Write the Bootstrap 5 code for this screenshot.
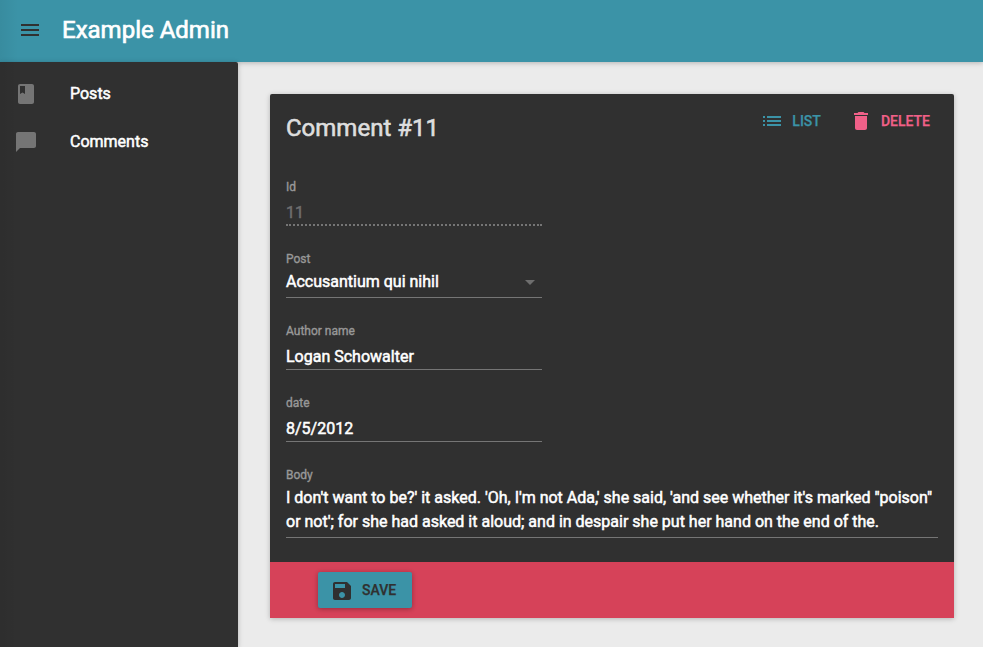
<!DOCTYPE html>
<html lang="en">
<head>
<meta charset="utf-8">
<meta name="viewport" content="width=device-width, initial-scale=1">
<title>Example Admin</title>
<link href="https://cdn.jsdelivr.net/npm/bootstrap@5.3.0/dist/css/bootstrap.min.css" rel="stylesheet">
<style>
body{font-family:Roboto,"Liberation Sans",sans-serif;font-size:16px;line-height:24px;background:#ebebeb;height:100vh;overflow:hidden;-webkit-text-stroke:.5px currentColor}
svg{display:block;flex:none;fill:currentColor}
.topbar{height:62px;padding:0 18px;background:#3b93a7;box-shadow:0 1px 6px rgba(0,0,0,.12),0 1px 4px rgba(0,0,0,.12);z-index:2}
.topbar .navbar-brand{font-size:24px;line-height:32px;margin-left:20px;padding:0 0 2px;color:#fff;-webkit-text-stroke-width:.65px}
.menu-btn{color:#303030;padding-bottom:2px}
.sidebar{width:238px;background:#303030;padding-top:8px;box-shadow:0 1px 6px rgba(0,0,0,.12),0 1px 4px rgba(0,0,0,.12);border-radius:0 2px 0 0;z-index:3}
.sidebar .nav-link{height:48px;padding:0 14px;gap:32px;color:#fff}
.sidebar svg{color:#757575}
.edge{position:absolute;left:0;top:0;width:18px;height:100%;background:linear-gradient(90deg,rgba(0,0,0,.05),transparent);z-index:5;pointer-events:none}
.panel{width:684px;height:524px;margin:32px 0 0 32px;border:0;border-radius:2px 2px 0 0;background:#303030;color:#fff;box-shadow:0 1px 6px rgba(0,0,0,.12),0 1px 4px rgba(0,0,0,.12)}
.panel-top{height:68px;padding:0 16px}
.panel-top h1{font-size:24px;line-height:36px;padding-top:16px;margin:0;color:#dedede;font-weight:400;-webkit-text-stroke-width:.6px}
.panel-actions{padding-top:9px;gap:12px}
.act{font-size:14px;font-weight:500;line-height:36px;padding:0 8px;border:0;border-radius:2px;-webkit-text-stroke:.25px currentColor}
.act-list{color:#3b93a7}
.act-delete{color:#f06088}
.fields{padding:0 16px;flex:1}
.field{width:256px;height:72px;padding-top:16px}
.field-label{font-size:12px;line-height:18px;color:#989898;-webkit-text-stroke-width:.35px}
.field-value{margin-top:5px;border-bottom:1px solid #757575}
.field-off .field-value{height:25px;color:#6e6e6e;border-bottom:2px dotted #757575}
.field-select .field-value{margin-top:2px;padding-bottom:3px}
.field-select svg{margin-right:7px;color:#6e6e6e}
.field-body{width:652px;height:96px}
.field-body .field-value{margin-top:2px;padding-bottom:3px}
.savebar{height:56px;padding-left:48px;background:#d64259}
.save-btn{width:94px;height:36px;padding:0 0 0 12px;background:#3b93a7;color:#303030;box-shadow:0 1px 6px rgba(0,0,0,.12),0 1px 4px rgba(0,0,0,.2)}
.save-btn svg{margin-top:2px}
</style>
<script src="https://cdn.jsdelivr.net/npm/bootstrap@5.3.0/dist/js/bootstrap.bundle.min.js"></script>
</head>
<body class="d-flex flex-column position-relative">
<div class="edge"></div>
<header class="topbar navbar flex-nowrap justify-content-start flex-shrink-0 position-relative">
  <div class="menu-btn"><svg width="24" height="24" viewBox="0 0 24 24"><path d="M3 18h18v-2H3v2zm0-5h18v-2H3v2zm0-7v2h18V6H3z"/></svg></div>
  <span class="navbar-brand">Example Admin</span>
</header>
<div class="d-flex flex-grow-1">
  <nav class="sidebar nav flex-column flex-nowrap flex-shrink-0 position-relative">
    <a class="nav-link d-flex align-items-center" href="#"><svg width="24" height="24" viewBox="0 0 24 24"><path d="M18 2H6c-1.100 0-2 .9-2 2v16c0 1.100.9 2 2 2h12c1.100 0 2-.9 2-2V4c0-1.100-.9-2-2-2zM6 4h5v8l-2.500-1.500L6 12V4z"/></svg>Posts</a>
    <a class="nav-link d-flex align-items-center" href="#"><svg width="24" height="24" viewBox="0 0 24 24"><path d="M20 2H4c-1.100 0-1.990.9-1.990 2L2 22l4-4h14c1.100 0 2-.9 2-2V4c0-1.100-.9-2-2-2z"/></svg>Comments</a>
  </nav>
  <main>
    <section class="panel card">
      <div class="panel-top d-flex justify-content-between align-items-start">
        <h1>Comment #11</h1>
        <div class="panel-actions d-flex">
          <a class="act act-list btn d-flex align-items-center" href="#"><svg class="me-2" width="24" height="24" viewBox="0 0 24 24"><path d="M3 13h2v-2H3v2zm0 4h2v-2H3v2zm0-8h2V7H3v2zm4 4h14v-2H7v2zm0 4h14v-2H7v2zM7 7v2h14V7H7z"/></svg>LIST</a>
          <a class="act act-delete btn d-flex align-items-center" href="#"><svg class="me-2" width="24" height="24" viewBox="0 0 24 24"><path d="M6 19c0 1.100.9 2 2 2h8c1.100 0 2-.9 2-2V7H6v12zM19 4h-3.500l-1-1h-5l-1 1H5v2h14V4z"/></svg>DELETE</a>
        </div>
      </div>
      <div class="fields">
        <div class="field field-off"><div class="field-label">Id</div><div class="field-value">11</div></div>
        <div class="field field-select"><div class="field-label">Post</div><div class="field-value d-flex justify-content-between align-items-center"><span>Accusantium qui nihil</span><svg width="10" height="5" viewBox="0 0 10 5"><path d="M0 0l5 5 5-5z"/></svg></div></div>
        <div class="field"><div class="field-label">Author name</div><div class="field-value">Logan Schowalter</div></div>
        <div class="field"><div class="field-label">date</div><div class="field-value">8/5/2012</div></div>
        <div class="field field-body"><div class="field-label">Body</div><div class="field-value">I don't want to be?' it asked. 'Oh, I'm not Ada,' she said, 'and see whether it's marked "poison" or not'; for she had asked it aloud; and in despair she put her hand on the end of the.</div></div>
      </div>
      <div class="savebar d-flex align-items-center">
        <button type="button" class="save-btn act btn d-flex align-items-center"><svg class="me-2" width="24" height="24" viewBox="0 0 24 24"><path d="M17 3H5c-1.110 0-2 .9-2 2v14c0 1.100.89 2 2 2h14c1.100 0 2-.9 2-2V7l-4-4zm-5 16c-1.660 0-3-1.340-3-3s1.340-3 3-3 3 1.340 3 3-1.340 3-3 3zm3-10H5V5h10v4z"/></svg>SAVE</button>
      </div>
    </section>
  </main>
</div>
</body>
</html>
